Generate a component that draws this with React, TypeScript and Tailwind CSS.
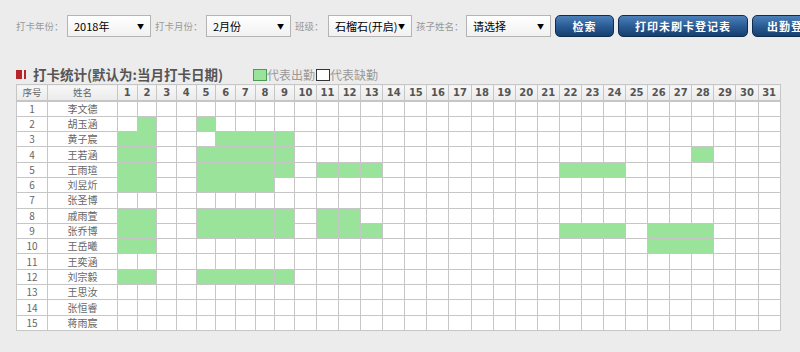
import React from 'react'

const cjk = { fontFamily: '"Noto Sans CJK SC", "Liberation Sans", sans-serif' }
const numFont = { fontFamily: '"DejaVu Sans", "Liberation Sans", sans-serif' }

const students = [
  { name: '李文德', on: [] },
  { name: '胡玉涵', on: [2, 5] },
  { name: '黄子宸', on: [1, 2, 6, 7, 8, 9] },
  { name: '王若涵', on: [1, 2, 5, 6, 7, 8, 9, 28] },
  { name: '王雨瑄', on: [1, 2, 5, 6, 7, 8, 9, 11, 12, 13, 22, 23, 24] },
  { name: '刘昱炘', on: [1, 2, 5, 6, 7, 8] },
  { name: '张圣博', on: [] },
  { name: '戚雨萱', on: [1, 2, 5, 6, 7, 8, 9, 11, 12] },
  { name: '张乔博', on: [1, 2, 5, 6, 7, 8, 9, 11, 12, 13, 22, 23, 24, 26, 27, 28] },
  { name: '王岳曦', on: [1, 2, 26, 27, 28] },
  { name: '王奕涵', on: [] },
  { name: '刘宗毅', on: [1, 2, 5, 6, 7, 8, 9] },
  { name: '王思汝', on: [] },
  { name: '张恒睿', on: [] },
  { name: '蒋雨宸', on: [] },
]

const days = Array.from({ length: 31 }, (_, i) => i + 1)

function FakeSelect({ value, width }: { value: string; width: string }) {
  return (
    <div
      className={`${width} h-[22px] shrink-0 flex items-center justify-between pl-[6px] pr-[6px] border border-[#b4b4b4] bg-gradient-to-b from-white to-[#f1f1f1] text-[11px] text-black`}
    >
      <span>{value}</span>
      <span className="text-[7px] leading-none">▼</span>
    </div>
  )
}

function BlueButton({ label, width }: { label: string; width: string }) {
  return (
    <div
      className={`${width} h-[22px] shrink-0 flex items-center justify-center rounded-[5px] border border-[#0e2c50] bg-gradient-to-b from-[#4d80b9] via-[#2a5c95] to-[#173f6e] text-white text-[11px] font-bold tracking-[1px] overflow-hidden whitespace-nowrap`}
    >
      {label}
    </div>
  )
}

export default function App() {
  return (
    <div className="w-[800px] h-[352px] overflow-hidden bg-[#ececec] pl-4 pt-[15px]" style={cjk}>
      {/* filter bar */}
      <div className="flex items-center h-[22px] gap-1 whitespace-nowrap">
        <span className="w-[47px] shrink-0 text-[9.5px] text-[#999]">打卡年份：</span>
        <FakeSelect value="2018年" width="w-[84px]" />
        <span className="w-[47px] shrink-0 text-[9.5px] text-[#999]">打卡月份：</span>
        <FakeSelect value="2月份" width="w-[85px]" />
        <span className="w-[29px] shrink-0 text-[9.5px] text-[#999]">班级：</span>
        <FakeSelect value="石榴石(开启)" width="w-[84px]" />
        <span className="w-[46px] shrink-0 text-[9.5px] text-[#999]">孩子姓名：</span>
        <FakeSelect value="请选择" width="w-[85px]" />
        <BlueButton label="检索" width="w-[59px]" />
        <BlueButton label="打印未刷卡登记表" width="w-[130px]" />
        <BlueButton label="出勤登记表" width="w-[90px]" />
      </div>

      {/* title + legend */}
      <div className="mt-[28px] h-[19px] flex items-center">
        <span className="w-[6px] h-[9px] bg-[#b5252b]" />
        <span className="ml-[2px] w-[2px] h-[9px] bg-[#b5252b]" />
        <span className="ml-[7px] text-[13.5px] font-bold text-[#555]">打卡统计(默认为:当月打卡日期)</span>
        <span className="ml-[30px] w-[14px] h-[12px] bg-[#99e39b] border border-[#4f9a52]" />
        <span className="text-[12px] text-[#999]">代表出勤</span>
        <span className="ml-[1px] w-[14px] h-[12px] bg-white border border-[#333]" />
        <span className="text-[12px] text-[#999]">代表缺勤</span>
      </div>

      {/* attendance grid */}
      <table className="border-collapse table-fixed w-[764px] bg-white">
        <colgroup>
          <col className="w-[31px]" />
          <col className="w-[70px]" />
          {days.map((d) => (
            <col key={d} className={d <= 9 ? 'w-[19.67px]' : 'w-[22.09px]'} />
          ))}
        </colgroup>
        <thead>
          <tr>
            <th className="h-[16.5px] p-0 border border-b-2 border-[#c6c6c6] bg-gradient-to-b from-[#f7f7f7] to-[#ebebeb] text-[9.5px] font-normal text-[#666]">
              序号
            </th>
            <th className="h-[16.5px] p-0 border border-b-2 border-[#c6c6c6] bg-gradient-to-b from-[#f7f7f7] to-[#ebebeb] text-[9.5px] font-normal text-[#666]">
              姓名
            </th>
            {days.map((d) => (
              <th
                key={d}
                className="h-[16.5px] p-0 border border-b-2 border-[#c6c6c6] bg-gradient-to-b from-[#f7f7f7] to-[#ebebeb] text-[10px] font-bold text-[#555]"
                style={numFont}
              >
                {d}
              </th>
            ))}
          </tr>
        </thead>
        <tbody>
          {students.map((s, i) => (
            <tr key={s.name}>
              <td className="h-[15.3px] p-0 border border-[#c6c6c6] text-center text-[10px] leading-none text-[#666]">
                {i + 1}
              </td>
              <td className="h-[15.3px] p-0 border border-[#c6c6c6] text-center text-[10px] leading-none text-[#666]">
                {s.name}
              </td>
              {days.map((d) => (
                <td
                  key={d}
                  className={`h-[15.3px] p-0 border border-[#c6c6c6] ${s.on.includes(d) ? 'bg-[#99e39b]' : ''}`}
                />
              ))}
            </tr>
          ))}
        </tbody>
      </table>
    </div>
  )
}
